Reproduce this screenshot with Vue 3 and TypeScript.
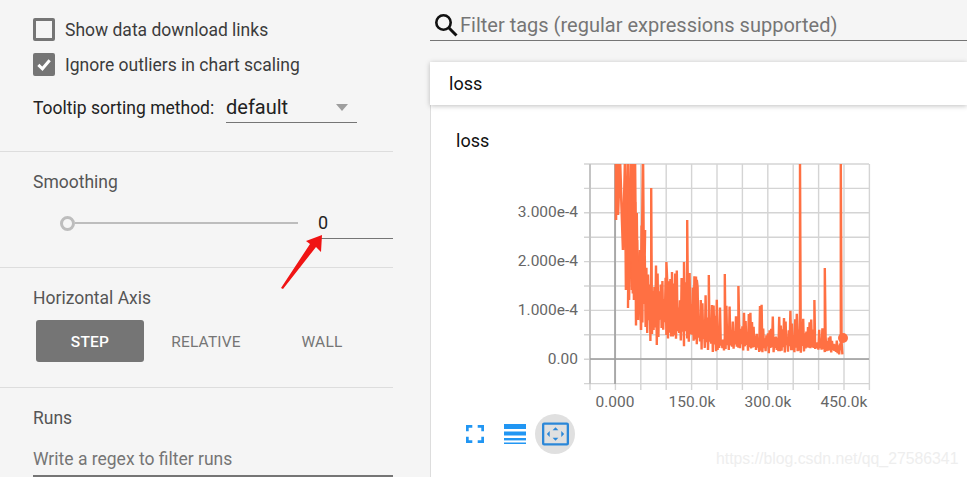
<script setup lang="ts">
const vLines = Array.from({ length: 12 }, (_, i) => 590 + i * 25.4)
const hLines = Array.from({ length: 10 }, (_, i) => 164 + i * 24.4)
const yLabels = [
  { t: '3.000e-4', y: 212 },
  { t: '2.000e-4', y: 261 },
  { t: '1.000e-4', y: 310 },
  { t: '0.00', y: 359 },
]
const xLabels = [
  { t: '0.000', x: 615 },
  { t: '150.0k', x: 692 },
  { t: '300.0k', x: 768 },
  { t: '450.0k', x: 844 },
]

function lerpTable(table: number[][], x: number): number {
  for (let i = 1; i < table.length; i++) {
    if (x <= table[i][0]) {
      const [x0, y0] = table[i - 1]
      const [x1, y1] = table[i]
      return y0 + ((y1 - y0) * (x - x0)) / (x1 - x0)
    }
  }
  return table[table.length - 1][1]
}

const lower = [[615, 220], [620, 240], [625, 300], [632, 322], [640, 333], [646, 343], [660, 346], [680, 348], [720, 354], [740, 351], [760, 353], [800, 354], [820, 352], [832, 354], [843, 356]]
const upper = [[628, 164], [636, 190], [642, 225], [650, 262], [668, 268], [690, 264], [700, 276], [720, 298], [738, 308], [745, 288], [760, 300], [780, 308], [800, 308], [815, 306], [825, 326], [843, 326]]
const mid = [[628, 190], [640, 275], [660, 300], [690, 318], [720, 340], [760, 338], [800, 340], [825, 346], [843, 346]]
const spikes: Record<number, number> = { 651: 188, 666: 262, 684: 262, 687: 220, 709: 275, 725: 274, 672: 272, 697: 280, 738: 286, 800: 160, 814: 300, 825: 268, 841: 160 }

let seed = 12345
function rnd(): number {
  seed = (seed * 1664525 + 1013904223) >>> 0
  return seed / 4294967296
}

const pts: string[] = []
let flip = false
for (let x = 628; x <= 843; x += 0.8) {
  const lo = lerpTable(lower, x)
  const up = lerpTable(upper, x)
  const md = lerpTable(mid, x)
  flip = !flip
  let y: number
  if (flip) {
    y = lo - rnd() * (lo - md) * 0.6
  } else {
    const r = rnd()
    y = md + (up - md) * Math.pow(r, 1.3)
  }
  pts.push(`${x.toFixed(1)},${y.toFixed(1)}`)
  for (const k of Object.keys(spikes)) {
    if (Math.abs(Number(k) - x) < 0.4) {
      pts.push(`${x.toFixed(1)},${spikes[Number(k)]}`)
    }
  }
}
const series = pts.join(' ')
const head = '616,220 616,160 618,160 618,215 620,160 623,250 625,160 626,290 628,160 629,300 631,160 632,290 633,160 634,300 635,160 636,280 637,240 638,320 640,250 641,330 643,160 644,300 645,230'
</script>

<template>
  <div class="page">
    <aside class="side">
      <section class="sec sec-opts">
        <label class="check-row">
          <span class="box"></span>
          <span>Show data download links</span>
        </label>
        <label class="check-row">
          <span class="box on">
            <svg width="17" height="17" viewBox="0 0 17 17"><path d="M2.5 9 L6.8 13 L14.5 4" fill="none" stroke="#fff" stroke-width="3.2" /></svg>
          </span>
          <span>Ignore outliers in chart scaling</span>
        </label>
        <div class="sort-row">
          <span class="sort-label">Tooltip sorting method:</span>
          <div class="select">
            <span>default</span>
            <i class="caret"></i>
          </div>
        </div>
      </section>

      <section class="sec sec-smooth">
        <div class="sec-title">Smoothing</div>
        <div class="slider-row">
          <span class="knob"></span>
          <span class="track"></span>
          <span class="value">0</span>
        </div>
      </section>

      <section class="sec sec-axis">
        <div class="sec-title">Horizontal Axis</div>
        <div class="axis-btns">
          <span class="ax-btn active">STEP</span>
          <span class="ax-btn rel">RELATIVE</span>
          <span class="ax-btn wall">WALL</span>
        </div>
      </section>

      <section class="sec sec-runs">
        <div class="sec-title">Runs</div>
        <div class="regex">Write a regex to filter runs</div>
      </section>

      <svg class="arrow" width="50" height="60" viewBox="0 0 50 60">
        <polygon points="41,0 40,17 35,12 2,54 0,53 29,9 25,6" fill="#f01414" />
      </svg>
    </aside>

    <main class="main">
      <div class="search">
        <svg width="24" height="24" viewBox="0 0 24 24">
          <circle cx="9.5" cy="9.5" r="7.2" fill="none" stroke="#111" stroke-width="2.6" />
          <path d="M14.8 14.8 L22.5 22.5" stroke="#111" stroke-width="3" />
        </svg>
        <span>Filter tags (regular expressions supported)</span>
      </div>
      <div class="tag-bar">loss</div>
      <div class="card-area">
        <div class="card-title">loss</div>
        <svg class="chart" width="430" height="250" viewBox="500 160 430 250">
          <defs>
            <clipPath id="plot"><rect x="590" y="164" width="280" height="220" /></clipPath>
          </defs>
          <g stroke="#d4d4d4" stroke-width="1.4">
            <line v-for="x in vLines" :key="'v' + x" :x1="x" :x2="x" y1="164" y2="390" />
            <line v-for="y in hLines" :key="'h' + y" x1="584" x2="869" :y1="y" :y2="y" />
          </g>
          <line x1="615" x2="615" y1="164" y2="384" stroke="#9e9e9e" stroke-width="1.6" />
          <line x1="590" x2="590" y1="164" y2="384" stroke="#c4c4c4" stroke-width="2" />
          <line x1="590" x2="869" y1="359" y2="359" stroke="#9e9e9e" stroke-width="1.6" />
          <g clip-path="url(#plot)" fill="none" stroke-linejoin="bevel">
            <polyline :points="head" stroke="#ff7043" stroke-width="2.6" />
            <polyline :points="series" stroke="#ff7043" stroke-width="2.4" />
          </g>
          <circle cx="843" cy="338" r="5" fill="#ff7043" />
          <g class="tick">
            <text v-for="l in yLabels" :key="l.t" x="578" :y="l.y + 4.5" text-anchor="end">{{ l.t }}</text>
            <text v-for="l in xLabels" :key="l.t" :x="l.x" y="407" text-anchor="middle">{{ l.t }}</text>
          </g>
        </svg>
        <div class="tools">
          <svg class="t-full" width="18" height="18" viewBox="0 0 20 20">
            <path d="M1.5 7 V1.5 H7 M13 1.5 H18.5 V7 M18.5 13 V18.5 H13 M7 18.5 H1.5 V13" fill="none" stroke="#2196f3" stroke-width="3" />
          </svg>
          <svg class="t-lines" width="24" height="22" viewBox="0 0 24 22">
            <rect x="1" y="1" width="22" height="5" fill="#2196f3" />
            <rect x="1" y="8.5" width="22" height="4" fill="#2196f3" />
            <rect x="1" y="15" width="22" height="2.4" fill="#2196f3" />
            <rect x="1" y="19.5" width="22" height="1.5" fill="#2196f3" />
          </svg>
          <span class="t-fit">
            <svg width="27" height="24" viewBox="0 0 28 24">
              <rect x="1.2" y="1.2" width="25.6" height="21.6" rx="1" fill="none" stroke="#2b87d8" stroke-width="2.4" />
              <path d="M14 5 L17 8 H11 Z M14 19 L11 16 H17 Z M5 12 L8 9 V15 Z M23 12 L20 15 V9 Z" fill="#2b87d8" />
            </svg>
          </span>
        </div>
      </div>
      <div class="mark">https://blog.csdn.net/qq_27586341</div>
    </main>
  </div>
</template>

<style scoped>
.page {
  display: flex;
  width: 967px;
  height: 477px;
  overflow: hidden;
  background: #f5f5f5;
  font-family: Roboto, "Liberation Sans", sans-serif;
  color: #333;
  position: relative;
}
.side {
  width: 430px;
  flex: none;
  position: relative;
  box-sizing: border-box;
  padding-right: 37px;
}
.sec {
  box-sizing: border-box;
  padding-left: 33px;
  border-bottom: 1px solid #ddd;
}
.sec-opts { height: 152px; padding-top: 18px; }
.sec-smooth { height: 116px; padding-top: 18px; }
.sec-axis { height: 120px; padding-top: 18px; }
.sec-runs { height: 89px; padding-top: 18px; border-bottom: none; }
.check-row {
  display: flex;
  align-items: center;
  gap: 10px;
  height: 23px;
  margin-bottom: 12px;
  font-size: 17.5px;
  color: #3c3c3c;
}
.box {
  width: 22px;
  height: 23px;
  box-sizing: border-box;
  border: 3px solid #757575;
  border-radius: 2px;
  display: flex;
  align-items: center;
  justify-content: center;
}
.box.on { background: #757575; }
.sort-row {
  display: flex;
  align-items: flex-start;
  margin-top: 8px;
}
.sort-label {
  font-size: 17.5px;
  color: #222;
  margin-top: 10px;
  width: 193px;
  flex: none;
}
.select {
  width: 131px;
  height: 35px;
  box-sizing: border-box;
  border-bottom: 1px solid #757575;
  font-size: 20px;
  letter-spacing: 0;
  color: #222;
  position: relative;
  padding-top: 7px;
}
.caret {
  position: absolute;
  right: 9px;
  top: 16px;
  width: 0;
  height: 0;
  border-left: 6.5px solid transparent;
  border-right: 6.5px solid transparent;
  border-top: 7px solid #9e9e9e;
}
.sec-title {
  font-size: 17.5px;
  color: #555;
  line-height: 24px;
}
.slider-row {
  display: flex;
  align-items: center;
  height: 30px;
  margin-top: 14px;
  position: relative;
  padding-left: 27px;
}
.knob {
  width: 15px;
  height: 15px;
  box-sizing: border-box;
  border: 3px solid #bdbdbd;
  border-radius: 50%;
  flex: none;
}
.track {
  width: 223px;
  height: 2px;
  background: #bdbdbd;
  flex: none;
}
.value {
  font-size: 18px;
  color: #222;
  margin-left: 20px;
  width: 75px;
  height: 30px;
  line-height: 30px;
  box-sizing: border-box;
  padding-left: 0;
  position: relative;
}
.value::after {
  content: "";
  position: absolute;
  left: 2px;
  right: 0;
  top: 30px;
  border-bottom: 1px solid #757575;
}
.axis-btns {
  display: flex;
  margin-top: 10px;
  margin-left: 3px;
}
.ax-btn {
  height: 42px;
  line-height: 44px;
  text-align: center;
  font-size: 15.5px;
  font-weight: 500;
  color: #757575;
  letter-spacing: 0.2px;
}
.ax-btn.active {
  width: 108px;
  background: #757575;
  color: #fff;
  border-radius: 3px;
}
.ax-btn.rel { width: 124px; font-weight: 400; }
.ax-btn.wall { width: 108px; font-weight: 400; }
.regex {
  margin-top: 15px;
  height: 33px;
  box-sizing: border-box;
  font-size: 17.5px;
  line-height: 28px;
  color: #757575;
  border-bottom: 3px solid #757575;
  margin-right: 0;
}
.arrow {
  position: absolute;
  left: 281px;
  top: 235px;
}
.main {
  flex: 1;
  display: flex;
  flex-direction: column;
  min-width: 0;
  position: relative;
}
.search {
  height: 41px;
  box-sizing: border-box;
  border-bottom: 1px solid #757575;
  display: flex;
  align-items: center;
  gap: 2px;
  padding-left: 4px;
  padding-top: 9px;
  font-size: 20px;
  color: #757575;
  flex: none;
}
.tag-bar {
  margin-top: 21px;
  height: 43px;
  line-height: 43px;
  background: #fff;
  padding-left: 19px;
  font-size: 18px;
  color: #111;
  box-shadow: 0 1px 5px rgba(0, 0, 0, 0.25);
  position: relative;
  z-index: 1;
  flex: none;
}
.card-area {
  flex: 1;
  background: #fff;
  border-left: 1px solid #ddd;
  padding-left: 25px;
  padding-top: 24px;
  min-height: 0;
}
.card-title {
  font-size: 18px;
  line-height: 24px;
  color: #111;
}
.chart {
  display: block;
  margin-left: 44px;
  margin-top: 7px;
  height: 250px;
}
.tick text {
  font-family: Roboto, "Liberation Sans", sans-serif;
  font-size: 15.5px;
  fill: #666;
}
.tools {
  display: flex;
  align-items: center;
  margin-top: 4px;
  margin-left: 10px;
}
.t-full { flex: none; }
.t-lines { flex: none; margin-left: 19px; }
.t-fit {
  width: 40px;
  height: 40px;
  border-radius: 50%;
  background: #e0e0e0;
  display: flex;
  align-items: center;
  justify-content: center;
  margin-left: 8px;
  flex: none;
}
.mark {
  position: absolute;
  left: 286px;
  top: 450px;
  font-family: "Liberation Sans", sans-serif;
  font-size: 15.8px;
  color: #eeeeee;
}
</style>
